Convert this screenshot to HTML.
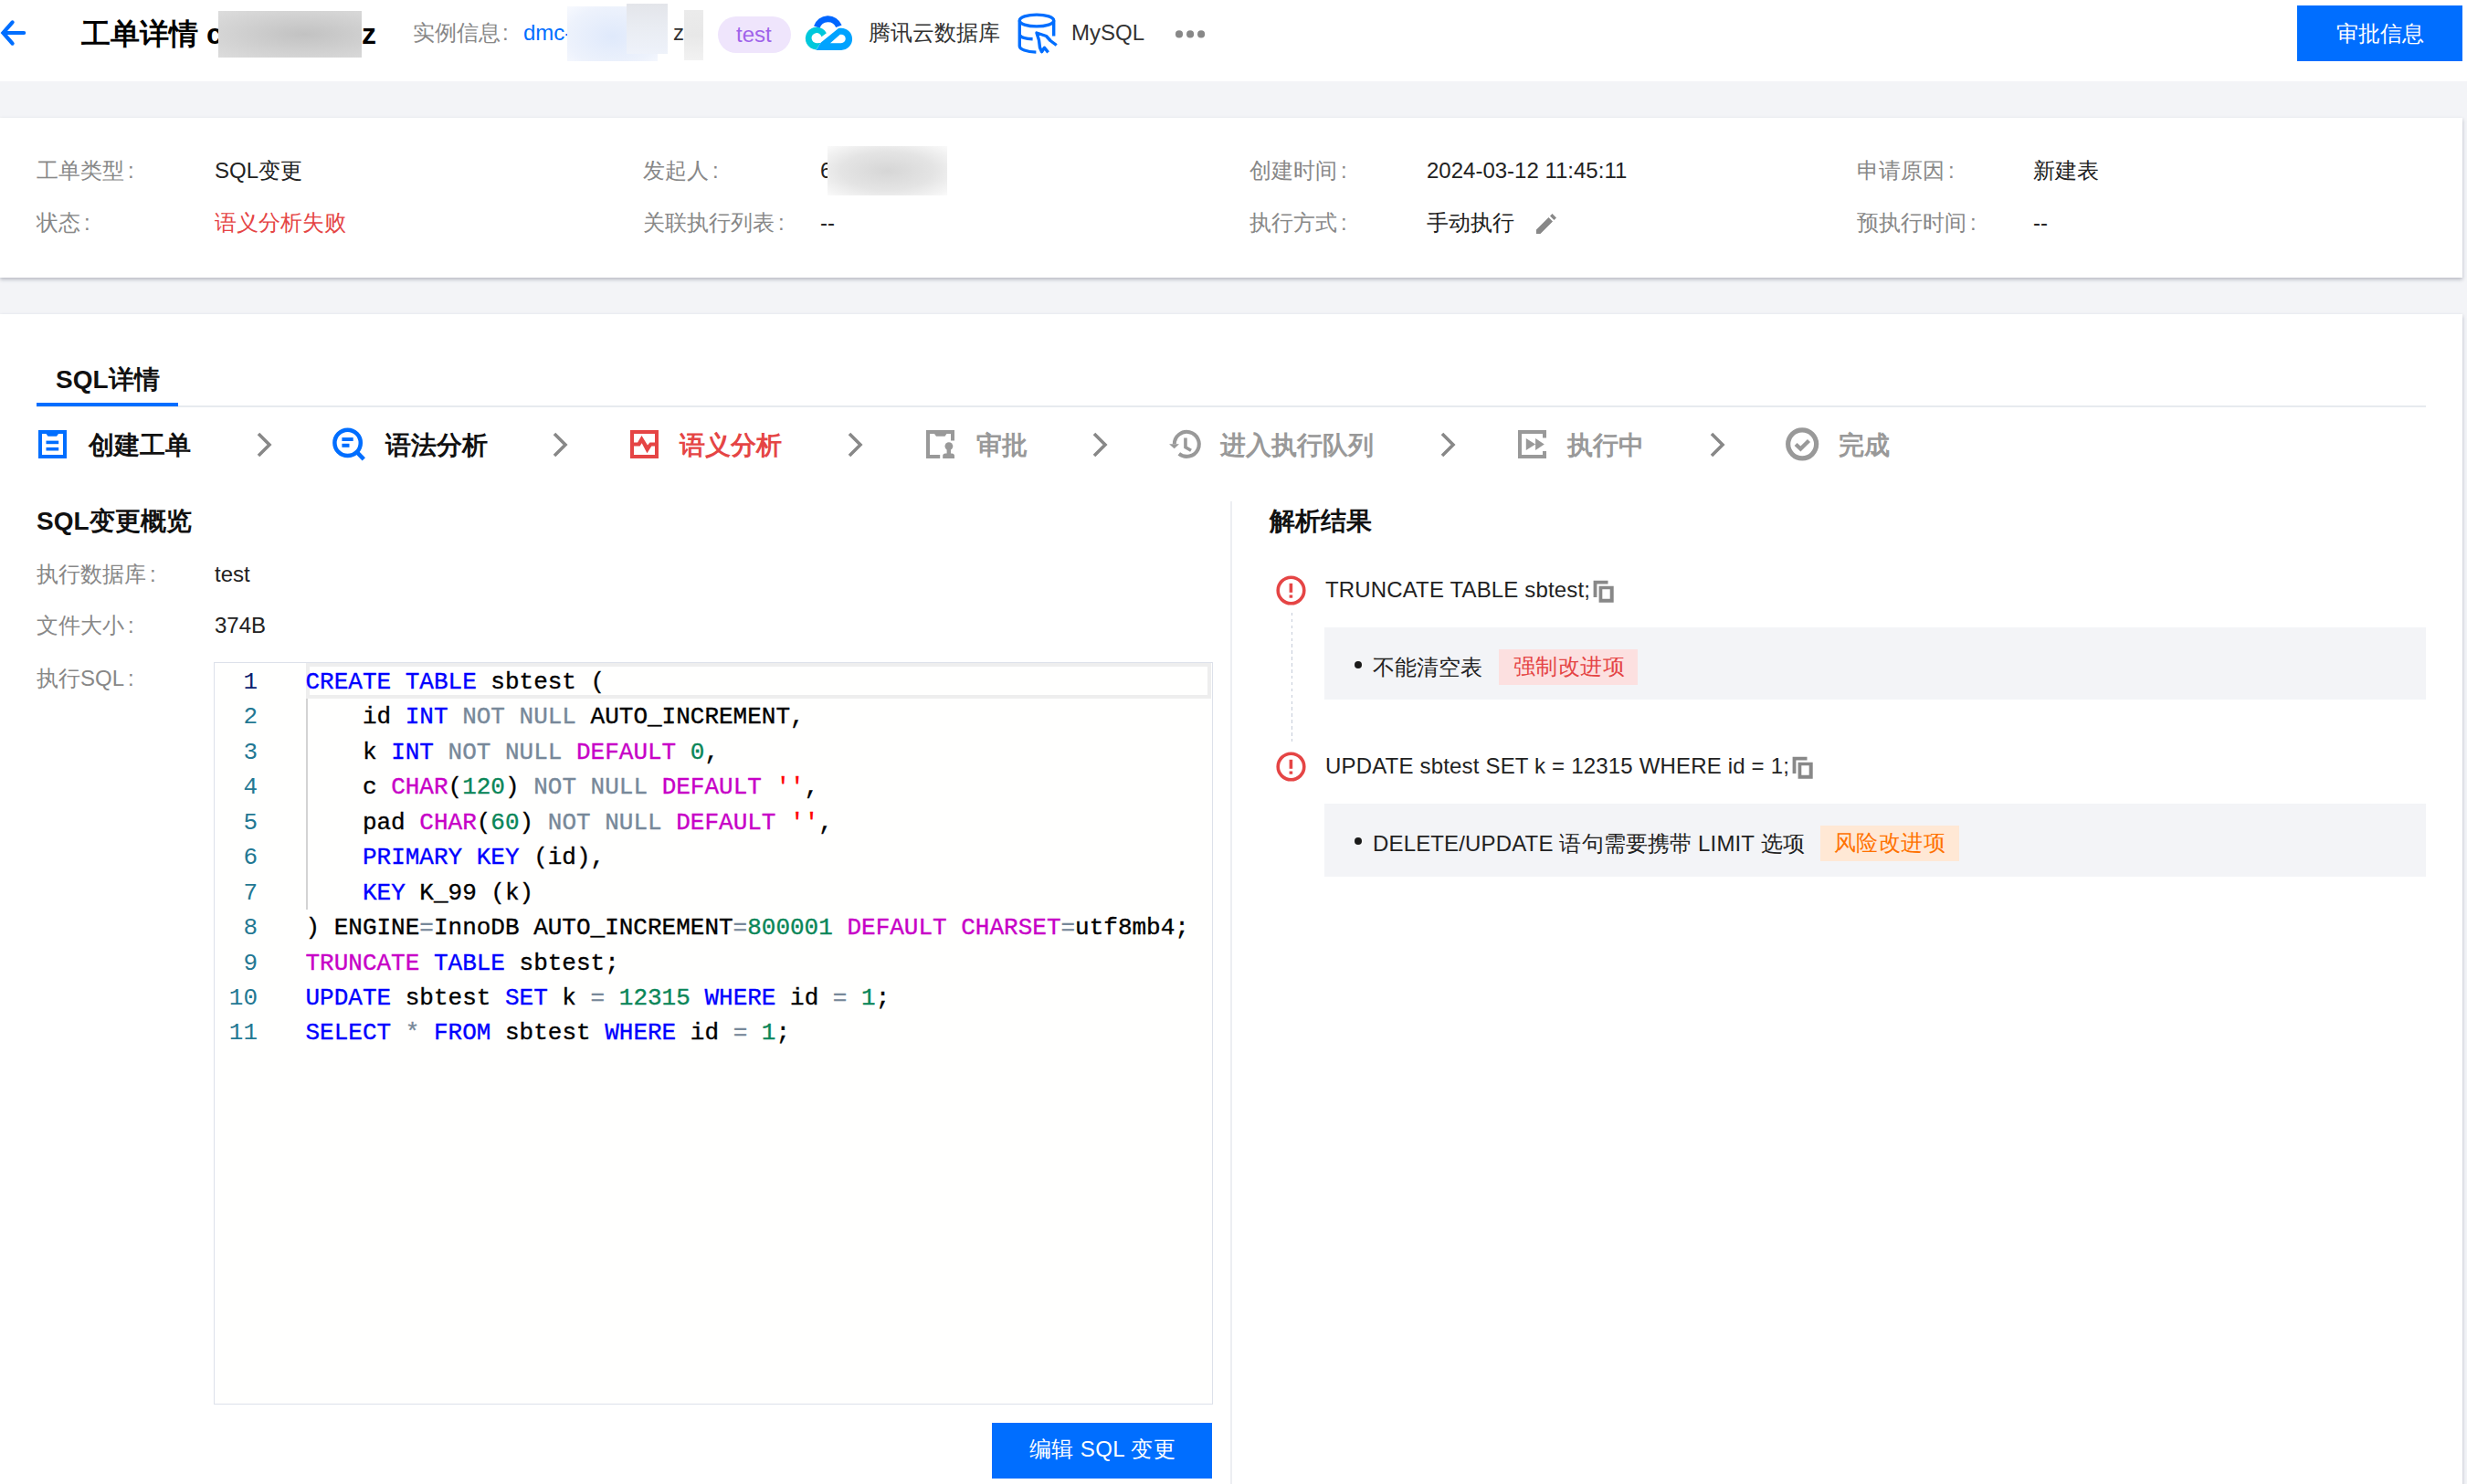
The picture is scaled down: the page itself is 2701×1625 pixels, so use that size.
<!DOCTYPE html>
<html><head><meta charset="utf-8">
<style>
*{margin:0;padding:0;box-sizing:border-box}
html,body{width:2701px;height:1625px;overflow:hidden;background:#f3f4f7;font-family:"Liberation Sans",sans-serif;color:#222}
.a{position:absolute}
.t{position:absolute;white-space:nowrap;line-height:1}
.f24{font-size:24px}
.f28{font-size:28px}
.b{font-weight:bold;color:#111}
.lbl{color:#888}
svg{position:absolute;overflow:visible}
</style></head><body>
<!-- header -->
<div class="a" style="left:0;top:0;width:2701px;height:89px;background:#fff"></div>
<svg style="left:0;top:22px" width="30" height="28" viewBox="0 0 30 28"><path d="M26.2 14H4M13.6 2.4L3.4 14 13.6 25.6" fill="none" stroke="#006eff" stroke-width="4.2" stroke-linecap="round"/></svg>
<div class="t b" style="left:89px;top:21px;font-size:32px;color:#000">工单详情 c</div>
<div class="a" style="left:239px;top:12px;width:157px;height:51px;background:radial-gradient(ellipse at 60% 50%,#c2c2c2 0%,#d2d2d2 60%,#dcdcdc 100%)"></div>
<div class="t b" style="left:396px;top:21px;font-size:32px;color:#000">z</div>
<div class="t f24 lbl" style="left:452px;top:24px">实例信息<span style="margin-left:2px">:</span></div>
<div class="t f24" style="left:573px;top:24px;color:#006eff">dmc-</div>
<div class="a" style="left:621px;top:7px;width:99px;height:60px;background:radial-gradient(ellipse at 50% 55%,#dfe9fb 0%,#edf2fc 70%,#f7f9fe 100%)"></div>
<div class="a" style="left:686px;top:4px;width:45px;height:55px;background:linear-gradient(to bottom,#e3e5ea 0%,#e9ecf2 45%,#eef2fa 100%)"></div>
<div class="t f24" style="left:737px;top:24px;color:#333">z</div>
<div class="a" style="left:749px;top:10.5px;width:21px;height:55px;background:linear-gradient(to bottom,#ebebeb 0%,#e8e8e8 50%,#f2f2f2 100%)"></div>
<div class="a" style="left:786px;top:17.5px;width:80px;height:40.5px;border-radius:20.25px;background:#efe5fc"></div>
<div class="t f24" style="left:806px;top:25.6px;color:#a063ea">test</div>
<!-- cloud icon -->
<svg style="left:876px;top:10px" width="64" height="52" viewBox="0 0 64 52">
<path d="M18.3 19.6 A12.8 12.8 0 0 1 42.4 18.8" fill="none" stroke="#0066ff" stroke-width="6.9"/>
<path d="M28.86 26.14 A12.3 12.3 0 1 0 17.46 44.38 L22.5 37.0 L18.1 37.2 A5.55 5.55 0 1 1 23.48 30.31 Z" fill="#00c8dc"/>
<path d="M17.5 44.9 L22.8 36.5 L42 21 C43 20.8 44 20.7 45 20.7 A12.1 12.1 0 0 1 45 44.9 Z M33 37.2 L45 37.2 A4.75 4.75 0 0 0 45 27.7 C44.6 27.7 44.2 27.7 43.8 27.7 Z" fill="#00a3ff" fill-rule="evenodd"/>
</svg>
<div class="t f24" style="left:951px;top:24px;color:#333">腾讯云数据库</div>
<!-- db icon -->
<svg style="left:1108px;top:8px" width="56" height="56" viewBox="0 0 56 56">
<ellipse cx="27" cy="14.5" rx="18.7" ry="6.4" fill="none" stroke="#006eff" stroke-width="3.4"/>
<path d="M8.3 14.5V42.5C8.3 46 16 48.8 26.4 49.1M45.7 14.5V31.5M8.3 30.5C10 33 15 34.5 22.6 34.7" fill="none" stroke="#006eff" stroke-width="3.4"/>
<path d="M48.7 41.5L42 36.5 37.5 31.5 27 28 29.5 36 30.5 44 32.5 48.7 35.5 44.2 39.6 49.4" fill="none" stroke="#006eff" stroke-width="3.4" stroke-linejoin="round"/>
</svg>
<div class="t f24" style="left:1173px;top:24px;color:#333">MySQL</div>
<svg style="left:1287px;top:32px" width="33" height="10" viewBox="0 0 33 10"><circle cx="4" cy="5.4" r="4.05" fill="#888"/><circle cx="16.1" cy="5.4" r="4.05" fill="#888"/><circle cx="28.1" cy="5.4" r="4.05" fill="#888"/></svg>
<div class="a" style="left:2515px;top:6px;width:181px;height:61px;background:#006eff"></div>
<div class="t f24" style="left:2558px;top:25px;color:#fff">审批信息</div>

<!-- card 1 -->
<div class="a" style="left:0;top:129px;width:2696px;height:175px;background:#fff;box-shadow:0 2px 4px rgba(54,58,80,.32)"></div>
<div class="t f24 lbl" style="left:40px;top:175px">工单类型<span style="margin-left:4px">:</span></div>
<div class="t f24" style="left:235px;top:175px">SQL变更</div>
<div class="t f24 lbl" style="left:40px;top:232px">状态<span style="margin-left:4px">:</span></div>
<div class="t f24" style="left:235px;top:232px;color:#e54545">语义分析失败</div>
<div class="t f24 lbl" style="left:704px;top:175px">发起人<span style="margin-left:4px">:</span></div>
<div class="t f24" style="left:898px;top:175px">6</div>
<div class="a" style="left:906px;top:160px;width:131px;height:54px;background:radial-gradient(ellipse at 50% 50%,#d6d6d6 0%,#e4e4e4 55%,#fafafa 100%)"></div>
<div class="t f24 lbl" style="left:704px;top:232px">关联执行列表<span style="margin-left:4px">:</span></div>
<div class="t f24" style="left:898px;top:232px">--</div>
<div class="t f24 lbl" style="left:1368px;top:175px">创建时间<span style="margin-left:4px">:</span></div>
<div class="t f24" style="left:1562px;top:175px">2024-03-12 11:45:11</div>
<div class="t f24 lbl" style="left:1368px;top:232px">执行方式<span style="margin-left:4px">:</span></div>
<div class="t f24" style="left:1562px;top:232px">手动执行</div>
<svg style="left:1681px;top:233px" width="24" height="24" viewBox="0 0 24 24"><path d="M1 18.5V23H5.5L19 9.5 14.5 5ZM16 3.5 20.5 8 23 5.5 18.5 1Z" fill="#888"/></svg>
<div class="t f24 lbl" style="left:2033px;top:175px">申请原因<span style="margin-left:4px">:</span></div>
<div class="t f24" style="left:2226px;top:175px">新建表</div>
<div class="t f24 lbl" style="left:2033px;top:232px">预执行时间<span style="margin-left:4px">:</span></div>
<div class="t f24" style="left:2226px;top:232px">--</div>

<!-- card 2 -->
<div class="a" style="left:0;top:344px;width:2696px;height:1300px;background:#fff;box-shadow:0 2px 4px rgba(54,58,80,.32)"></div>
<div class="t f28 b" style="left:61px;top:402px">SQL详情</div>
<div class="a" style="left:40px;top:444px;width:2616px;height:1.5px;background:#e7eaef"></div>
<div class="a" style="left:40px;top:441.2px;width:155px;height:4.3px;background:#006eff"></div>
<!-- steps -->
<svg style="left:42px;top:471px" width="31" height="31" viewBox="0 0 31 31"><path d="M2 2H29V29H2Z" fill="none" stroke="#006eff" stroke-width="4"/><path d="M8.5 2H22V4L20 6.7H10.5L8.5 4Z" fill="#006eff"/><rect x="8.5" y="11.6" width="13.7" height="3.6" fill="#006eff"/><rect x="8.5" y="18.9" width="13.7" height="3.6" fill="#006eff"/></svg>
<div class="t f28 b" style="left:97px;top:474px">创建工单</div>
<svg class="chev" style="left:281px;top:473px" width="16" height="28" viewBox="0 0 16 28"><path d="M2 2L14 14 2 26" fill="none" stroke="#888" stroke-width="3.6"/></svg>

<svg style="left:364px;top:468px" width="36" height="36" viewBox="0 0 36 36"><circle cx="16.6" cy="16.9" r="14.2" fill="none" stroke="#006eff" stroke-width="4.5"/><path d="M26.5 26.8L34.3 34.8" stroke="#006eff" stroke-width="4.6"/><rect x="10.4" y="11.1" width="12.3" height="3.9" fill="#006eff"/><rect x="10.4" y="17.8" width="8.1" height="4" fill="#006eff"/></svg>
<div class="t f28 b" style="left:421.5px;top:474px">语法分析</div>
<svg style="left:605px;top:473px" width="16" height="28" viewBox="0 0 16 28"><path d="M2 2L14 14 2 26" fill="none" stroke="#888" stroke-width="3.6"/></svg>

<svg style="left:690px;top:471px" width="31" height="31" viewBox="0 0 31 31"><path d="M2 2H29V29H2Z" fill="none" stroke="#e54545" stroke-width="4"/><path d="M2 13.46L8.08 13.46 12.53 6.04 19.0 16.5 21.5 13.46 29 13.46 29 17.6 23.35 17.6 18.46 25.32 12.68 14.35 10.6 17.6 2 17.6Z" fill="#e54545"/></svg>
<div class="t f28 b" style="left:744px;top:474px;color:#e54545">语义分析</div>
<svg style="left:928px;top:473px" width="16" height="28" viewBox="0 0 16 28"><path d="M2 2L14 14 2 26" fill="none" stroke="#888" stroke-width="3.6"/></svg>

<svg style="left:1014px;top:471px" width="32" height="31" viewBox="0 0 32 31"><path d="M15.2 29H2V2H29V11.5" fill="none" stroke="#999" stroke-width="4"/><path d="M9 2H22.5V4L20.5 6.7H11L9 4Z" fill="#999"/><circle cx="24.9" cy="17.6" r="4.4" fill="#999"/><path d="M18.2 31V28C18.2 26.5 19.5 25.6 21 25.6H22.6V21H27V25.6H28.2C29.7 25.6 31 26.5 31 28V31Z" fill="#999"/></svg>
<div class="t f28 b" style="left:1069px;top:474px;color:#999">审批</div>
<svg style="left:1196px;top:473px" width="16" height="28" viewBox="0 0 16 28"><path d="M2 2L14 14 2 26" fill="none" stroke="#888" stroke-width="3.6"/></svg>

<svg style="left:1280px;top:470px" width="36" height="33" viewBox="0 0 36 33"><path d="M10.82 26.86A13.5 13.5 0 1 0 5.8 16.35" fill="none" stroke="#999" stroke-width="4.05"/><path d="M0.04 16.2L10.96 16.2 5.7 21.3Z" fill="#999"/><path d="M17.95 9.5V19.8L24 23.3" fill="none" stroke="#999" stroke-width="3.6"/></svg>
<div class="t f28 b" style="left:1336px;top:474px;color:#999">进入执行队列</div>
<svg style="left:1577px;top:473px" width="16" height="28" viewBox="0 0 16 28"><path d="M2 2L14 14 2 26" fill="none" stroke="#888" stroke-width="3.6"/></svg>

<svg style="left:1662px;top:471px" width="32" height="31" viewBox="0 0 32 31"><path d="M29 8.5V2H2V29H29V23" fill="none" stroke="#999" stroke-width="4"/><path d="M8.8 9.1L19.1 15.5 8.8 21.9Z M19.1 9.1L28.8 15.5 19.1 21.9Z" fill="#999"/></svg>
<div class="t f28 b" style="left:1716px;top:474px;color:#999">执行中</div>
<svg style="left:1872px;top:473px" width="16" height="28" viewBox="0 0 16 28"><path d="M2 2L14 14 2 26" fill="none" stroke="#888" stroke-width="3.6"/></svg>

<svg style="left:1955px;top:468px" width="36" height="36" viewBox="0 0 36 36"><circle cx="18.15" cy="18.35" r="15.5" fill="none" stroke="#999" stroke-width="5.2"/><path d="M11.1 18.5L16.4 23.6 25.5 14.5" fill="none" stroke="#999" stroke-width="4.3"/></svg>
<div class="t f28 b" style="left:2013px;top:474px;color:#999">完成</div>

<!-- overview -->
<div class="t f28 b" style="left:40px;top:557px">SQL变更概览</div>
<div class="t f24 lbl" style="left:40px;top:617px">执行数据库<span style="margin-left:4px">:</span></div>
<div class="t f24" style="left:235px;top:617px">test</div>
<div class="t f24 lbl" style="left:40px;top:673px">文件大小<span style="margin-left:4px">:</span></div>
<div class="t f24" style="left:235px;top:673px">374B</div>
<div class="t f24 lbl" style="left:40px;top:731px">执行SQL<span style="margin-left:4px">:</span></div>
<div class="a" style="left:1347px;top:549px;width:2px;height:1100px;background:#eceef2"></div>
<!-- editor -->
<style>
.ed{position:absolute;left:234px;top:725px;width:1093.5px;height:812.5px;border:1.5px solid #dde1ea;background:#fffffe}
.ln{position:absolute;left:200px;width:82px;text-align:right;font-family:"Liberation Mono",monospace;font-size:26px;line-height:38.44px;color:#237893;white-space:pre}
.code{position:absolute;left:334.5px;font-family:"Liberation Mono",monospace;font-size:26px;line-height:38.44px;color:#000;white-space:pre;-webkit-text-stroke:0.35px currentColor}
.k{color:#0000ff}.o{color:#778899}.p{color:#c700c7}.s{color:#ff0000}.n{color:#098658}
</style>
<div class="ed"></div>
<div class="a" style="left:335px;top:726px;width:991px;height:39px;border:4px solid #eeeeee"></div>
<div class="a" style="left:335px;top:765px;width:2px;height:231px;background:#d3d3d3"></div>
<div class="ln" style="top:728px"><span style="color:#0b216f">1</span>
2
3
4
5
6
7
8
9
10
11</div>
<div class="code" style="top:728px"><span class="k">CREATE</span> <span class="k">TABLE</span> sbtest (
    id <span class="k">INT</span> <span class="o">NOT</span> <span class="o">NULL</span> AUTO_INCREMENT,
    k <span class="k">INT</span> <span class="o">NOT</span> <span class="o">NULL</span> <span class="p">DEFAULT</span> <span class="n">0</span>,
    c <span class="p">CHAR</span>(<span class="n">120</span>) <span class="o">NOT</span> <span class="o">NULL</span> <span class="p">DEFAULT</span> <span class="s">''</span>,
    pad <span class="p">CHAR</span>(<span class="n">60</span>) <span class="o">NOT</span> <span class="o">NULL</span> <span class="p">DEFAULT</span> <span class="s">''</span>,
    <span class="k">PRIMARY</span> <span class="k">KEY</span> (id),
    <span class="k">KEY</span> K_99 (k)
) ENGINE<span class="o">=</span>InnoDB AUTO_INCREMENT<span class="o">=</span><span class="n">800001</span> <span class="p">DEFAULT</span> <span class="p">CHARSET</span><span class="o">=</span>utf8mb4;
<span class="p">TRUNCATE</span> <span class="k">TABLE</span> sbtest;
<span class="k">UPDATE</span> sbtest <span class="k">SET</span> k <span class="o">=</span> <span class="n">12315</span> <span class="k">WHERE</span> id <span class="o">=</span> <span class="n">1</span>;
<span class="k">SELECT</span> <span class="o">*</span> <span class="k">FROM</span> sbtest <span class="k">WHERE</span> id <span class="o">=</span> <span class="n">1</span>;</div>
<div class="a" style="left:1086px;top:1558px;width:241px;height:61px;background:#006eff"></div>
<div class="t f24" style="left:1127px;top:1575px;color:#fff;letter-spacing:0.4px">编辑 SQL 变更</div>

<!-- right panel -->
<div class="t f28 b" style="left:1390px;top:557px">解析结果</div>
<svg style="left:1397px;top:630px" width="33" height="33" viewBox="0 0 33 33"><circle cx="16.5" cy="16.5" r="14.3" fill="none" stroke="#e54545" stroke-width="3.6"/><rect x="14.6" y="8.8" width="3.6" height="10" fill="#e54545"/><rect x="14.6" y="21.5" width="3.6" height="3.2" fill="#e54545"/></svg>
<div class="t f24" style="left:1451px;top:634px;color:#222;letter-spacing:0.15px">TRUNCATE TABLE sbtest;</div>
<svg style="left:1744px;top:636px" width="24" height="24" viewBox="0 0 24 24"><path d="M0.6 -0.2H16.5V3.6H4.4V17.9H0.6Z" fill="#888"/><path d="M6.6 5.7H22.7V23.8H6.6Z M10.3 9.2V19.8H18.7V9.2Z" fill="#888" fill-rule="evenodd"/></svg>
<div class="a" style="left:1414px;top:671px;width:1px;height:144px;background:repeating-linear-gradient(to bottom,#c5ccd9 0,#c5ccd9 3.5px,transparent 3.5px,transparent 6.9px)"></div>
<div class="a" style="left:1450px;top:687px;width:1206px;height:79px;background:#f3f4f7"></div>
<div class="a" style="left:1483px;top:723.5px;width:8px;height:8px;border-radius:50%;background:#1a1a1a"></div>
<div class="t f24" style="left:1503px;top:719px;color:#222">不能清空表</div>
<div class="a" style="left:1641px;top:711px;width:152px;height:39px;background:#fce0e0"></div>
<div class="t f24" style="left:1656.5px;top:718px;color:#e54545;letter-spacing:0.6px">强制改进项</div>

<svg style="left:1397px;top:823px" width="33" height="33" viewBox="0 0 33 33"><circle cx="16.5" cy="16.5" r="14.3" fill="none" stroke="#e54545" stroke-width="3.6"/><rect x="14.6" y="8.8" width="3.6" height="10" fill="#e54545"/><rect x="14.6" y="21.5" width="3.6" height="3.2" fill="#e54545"/></svg>
<div class="t f24" style="left:1451px;top:827px;color:#222;letter-spacing:0.18px">UPDATE sbtest SET k = 12315 WHERE id = 1;</div>
<svg style="left:1962px;top:829px" width="24" height="24" viewBox="0 0 24 24"><path d="M0.6 -0.2H16.5V3.6H4.4V17.9H0.6Z" fill="#888"/><path d="M6.6 5.7H22.7V23.8H6.6Z M10.3 9.2V19.8H18.7V9.2Z" fill="#888" fill-rule="evenodd"/></svg>
<div class="a" style="left:1450px;top:880px;width:1206px;height:80px;background:#f3f4f7"></div>
<div class="a" style="left:1483px;top:916.5px;width:8px;height:8px;border-radius:50%;background:#1a1a1a"></div>
<div class="t f24" style="left:1503px;top:912px;color:#222;letter-spacing:0.15px">DELETE/UPDATE 语句需要携带 LIMIT 选项</div>
<div class="a" style="left:1993px;top:904px;width:152px;height:39px;background:#ffe8d5"></div>
<div class="t f24" style="left:2007.5px;top:911px;color:#ff7200;letter-spacing:0.6px">风险改进项</div>
</body></html>
